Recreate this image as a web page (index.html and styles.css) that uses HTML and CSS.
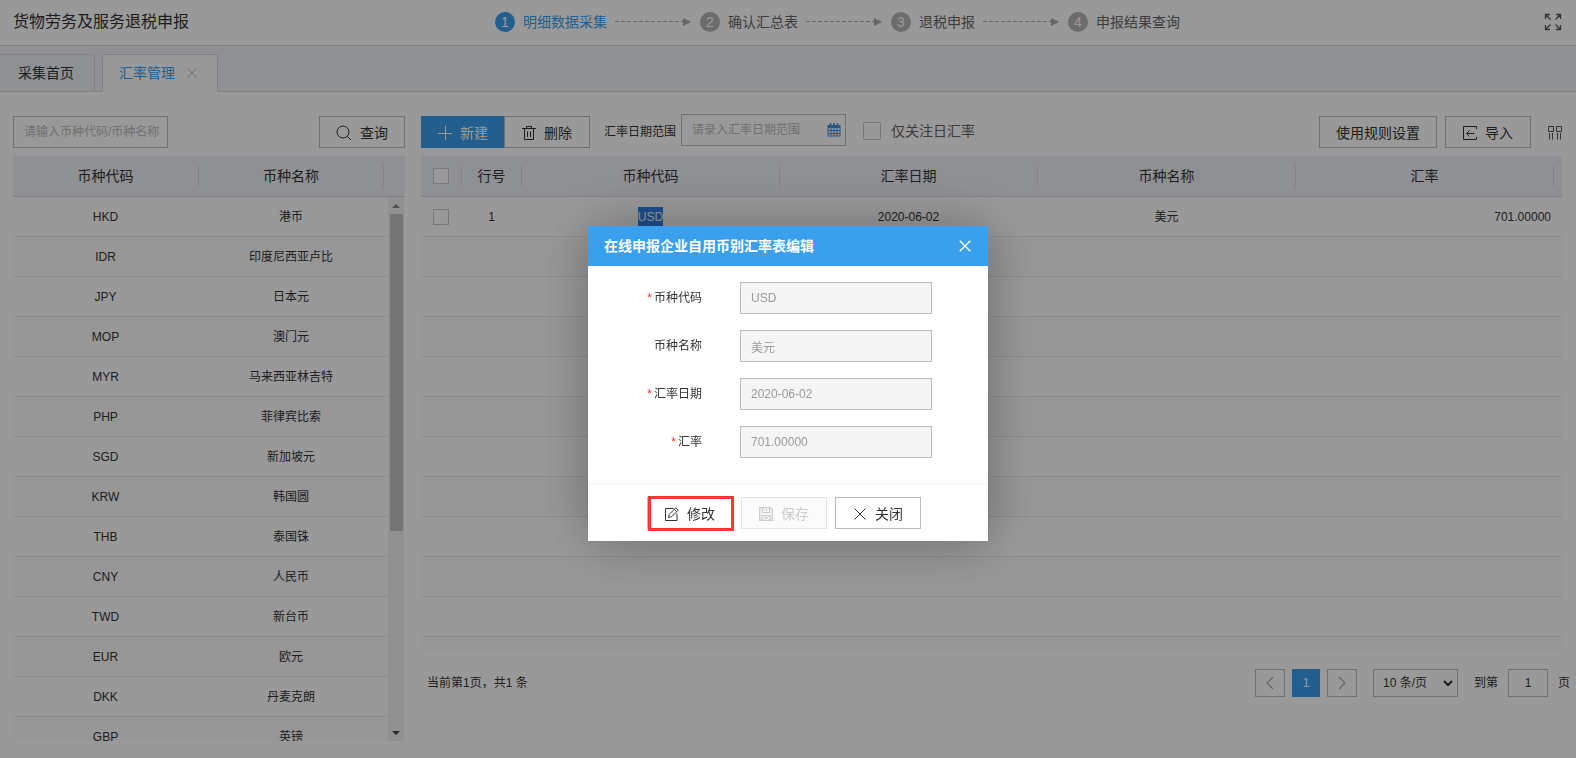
FILE: index.html
```html
<!DOCTYPE html>
<html lang="zh-CN">
<head>
  <meta charset="UTF-8">
  <meta name="viewport" content="width=device-width, initial-scale=1.0">
  <title>货物劳务及服务退税申报</title>
  <link rel="stylesheet" href="styles.css">
</head>
<body>
  <header class="header">
    <h1 class="title">货物劳务及服务退税申报</h1>
    <ol class="steps">
      <li class="step active"><span class="num">1</span>明细数据采集<i class="line"></i></li>
      <li class="step"><span class="num">2</span>确认汇总表<i class="line"></i></li>
      <li class="step"><span class="num">3</span>退税申报<i class="line"></i></li>
      <li class="step"><span class="num">4</span>申报结果查询</li>
    </ol>
    <button class="icon-btn full" aria-label="全屏">
      <svg width="18" height="18" viewBox="0 0 18 18" fill="none" stroke="#555" stroke-width="1.3">
        <path d="M1.5 6V1.5H6M1.5 1.5L6.5 6.5M12 1.5h4.5V6M16.5 1.5L11.5 6.5M1.5 12v4.5H6M1.5 16.5L6.5 11.5M12 16.5h4.5V12M16.5 16.5L11.5 11.5"/>
      </svg>
    </button>
  </header>

  <nav class="tabs">
    <a class="tab first" href="#">采集首页</a>
    <a class="tab current" href="#">汇率管理
      <svg width="10" height="10" viewBox="0 0 10 10" stroke="#bbb"><path d="M.5.5l9 9M9.5.5l-9 9"/></svg>
    </a>
  </nav>

  <main class="main">
    <section class="left">
      <div class="toolbar between">
        <input class="text search" type="text" placeholder="请输入币种代码/币种名称" aria-label="币种">
        <button class="btn">
          <svg width="16" height="16" viewBox="0 0 16 16" fill="none" stroke="currentColor"><circle cx="7" cy="7" r="6"/><path d="M11.3 11.3L15 15"/></svg>
          查询
        </button>
      </div>
      <div class="list">
        <table class="grid">
          <colgroup><col class="c-code"><col class="c-name"><col></colgroup>
          <thead>
            <tr><th><span>币种代码</span></th><th><span>币种名称</span></th><th></th></tr>
          </thead>
          <tbody>
            <tr><td>HKD</td><td>港币</td><td></td></tr>
            <tr><td>IDR</td><td>印度尼西亚卢比</td><td></td></tr>
            <tr><td>JPY</td><td>日本元</td><td></td></tr>
            <tr><td>MOP</td><td>澳门元</td><td></td></tr>
            <tr><td>MYR</td><td>马来西亚林吉特</td><td></td></tr>
            <tr><td>PHP</td><td>菲律宾比索</td><td></td></tr>
            <tr><td>SGD</td><td>新加坡元</td><td></td></tr>
            <tr><td>KRW</td><td>韩国圆</td><td></td></tr>
            <tr><td>THB</td><td>泰国铢</td><td></td></tr>
            <tr><td>CNY</td><td>人民币</td><td></td></tr>
            <tr><td>TWD</td><td>新台币</td><td></td></tr>
            <tr><td>EUR</td><td>欧元</td><td></td></tr>
            <tr><td>DKK</td><td>丹麦克朗</td><td></td></tr>
            <tr><td>GBP</td><td>英镑</td><td></td></tr>
          </tbody>
        </table>
        <div class="scrollbar">
          <i class="arrow up"></i>
          <div class="track"><div class="thumb"></div></div>
          <i class="arrow down"></i>
        </div>
      </div>
    </section>

    <section class="right">
      <div class="toolbar">
        <div class="group">
          <button class="btn primary">
            <svg width="14" height="14" viewBox="0 0 14 14" stroke="currentColor"><path d="M7.5 0v14M0 7.5h14"/></svg>
            新建
          </button>
          <button class="btn">
            <svg width="14" height="14" viewBox="0 0 14 14" fill="none" stroke="currentColor"><path d="M0 2.5h14M4.5 2.5v-2h5v2M2.5 2.5v11h9v-11M5.5 5.5v5.5M8.500 5.500v5.500"/></svg>
            删除
          </button>
        </div>
        <label class="range-label" for="range">汇率日期范围</label>
        <div class="range">
          <input class="text" id="range" type="text" placeholder="请录入汇率日期范围">
          <svg width="14" height="14" viewBox="0 0 14 14" fill="none" stroke="#4a90dc"><rect x="1" y="2.5" width="12" height="10.5"/><path d="M1 3.5h12" stroke-width="3"/><path d="M1 7.5h12M1 10.5h12M4 4v9M7 4v9M10 4v9"/><path d="M3.5 0v3M7 0v3M10.5 0v3" stroke-width="1.5"/></svg>
        </div>
        <label class="only"><input class="check large" type="checkbox">仅关注日汇率</label>
        <div class="actions">
          <button class="btn">使用规则设置</button>
          <button class="btn">
            <svg width="14" height="14" viewBox="0 0 14 14" fill="none" stroke="currentColor"><path d="M13.5 3V.5H.5v13h13V11M3.5 7.5h8M6.5 4.5l-3 3 3 3"/></svg>
            导入
          </button>
          <button class="icon-btn" aria-label="列设置">
            <svg width="14" height="14" viewBox="0 0 14 14" fill="none" stroke="#555"><path d="M.5.5h5v5h-5zM8.5.5h5v5h-5zM1.5 7v6.500M4.5 7v6.500M9.5 7v6.500M12.5 7v6.500"/></svg>
          </button>
        </div>
      </div>

      <div class="rates">
        <table class="grid">
          <colgroup><col class="c-check"><col class="c-no"><col><col><col><col><col class="c-end"></colgroup>
          <thead>
            <tr>
              <th><span><input class="check" type="checkbox" aria-label="全选"></span></th>
              <th><span>行号</span></th>
              <th><span>币种代码</span></th>
              <th><span>汇率日期</span></th>
              <th><span>币种名称</span></th>
              <th><span>汇率</span></th>
              <th></th>
            </tr>
          </thead>
          <tbody>
            <tr>
              <td><input class="check" type="checkbox" aria-label="选择第1行"></td>
              <td>1</td>
              <td><mark>USD</mark></td>
              <td>2020-06-02</td>
              <td>美元</td>
              <td class="num-cell">701.00000</td>
              <td></td>
            </tr>
            <tr><td colspan="7"></td></tr>
            <tr><td colspan="7"></td></tr>
            <tr><td colspan="7"></td></tr>
            <tr><td colspan="7"></td></tr>
            <tr><td colspan="7"></td></tr>
            <tr><td colspan="7"></td></tr>
            <tr><td colspan="7"></td></tr>
            <tr><td colspan="7"></td></tr>
            <tr><td colspan="7"></td></tr>
            <tr><td colspan="7"></td></tr>
            <tr><td colspan="7"></td></tr>
          </tbody>
        </table>
      </div>

      <div class="pager">
        <span class="total">当前第1页，共1 条</span>
        <button class="page" aria-label="上一页"><svg width="8" height="14" viewBox="0 0 8 14" fill="none" stroke="currentColor" stroke-width="1.3"><path d="M7 1L1 7l6 6"/></svg></button>
        <button class="page now">1</button>
        <button class="page" aria-label="下一页"><svg width="8" height="14" viewBox="0 0 8 14" fill="none" stroke="currentColor" stroke-width="1.3"><path d="M1 1l6 6-6 6"/></svg></button>
        <div class="size">
          <select aria-label="每页条数"><option>10 条/页</option></select>
          <svg width="10" height="7" viewBox="0 0 10 7" fill="none" stroke="#333" stroke-width="2"><path d="M1 1l4 4 4-4"/></svg>
        </div>
        <label for="goto">到第</label>
        <input class="text goto" id="goto" type="text" value="1">
        <span>页</span>
      </div>
    </section>
  </main>

  <div class="mask">
    <div class="dialog" role="dialog" aria-labelledby="dlgTitle">
      <div class="dialog-head">
        <h2 id="dlgTitle">在线申报企业自用币别汇率表编辑</h2>
        <button class="icon-btn" aria-label="关闭窗口">
          <svg width="12" height="12" viewBox="0 0 12 12" stroke="#fff" stroke-width="1.3"><path d="M.7.7l10.6 10.6M11.3.7L.7 11.3"/></svg>
        </button>
      </div>
      <form class="dialog-body">
        <label for="code"><b>*</b>币种代码</label>
        <input class="text" id="code" type="text" value="USD" disabled>
        <label for="name">币种名称</label>
        <input class="text" id="name" type="text" value="美元" disabled>
        <label for="date"><b>*</b>汇率日期</label>
        <input class="text" id="date" type="text" value="2020-06-02" disabled>
        <label for="rate"><b>*</b>汇率</label>
        <input class="text" id="rate" type="text" value="701.00000" disabled>
      </form>
      <div class="dialog-foot">
        <button class="btn marked">
          <svg width="14" height="14" viewBox="0 0 14 14" fill="none" stroke="currentColor"><path d="M8.5 1.5h-8v12h11.500V6.500M3.500 10.500l.8-3.200L10.800.8l2.400 2.400-6.500 6.500zM9.300 2.300l2.400 2.400"/></svg>
          修改
        </button>
        <button class="btn" disabled>
          <svg width="14" height="14" viewBox="0 0 14 14" fill="none" stroke="currentColor" stroke-width="1.3"><path d="M.7.7h10.6l2 2v10.6H.7zM3.5.7v5h7v-5M7.5 2v2M3 13.3V8.7h8v4.600M5 11h4"/></svg>
          保存
        </button>
        <button class="btn">
          <svg width="14" height="14" viewBox="0 0 14 14" stroke="currentColor"><path d="M1.5 1.5l11 11M12.5 1.5l-11 11"/></svg>
          关闭
        </button>
      </div>
    </div>
  </div>
</body>
</html>
```

FILE: styles.css
```css
* {
  box-sizing: border-box;
}
body {
  margin: 0;
  font: 12px/20px "Liberation Sans", "Noto Sans CJK SC", sans-serif;
  color: #333;
  background: #fff;
}
button, input, select {
  font: inherit;
  color: inherit;
  margin: 0;
}
svg {
  flex: none;
}

/* header */
.header {
  display: flex;
  align-items: center;
  height: 46px;
  padding: 0 14px 2px 13px;
  border-bottom: 1px solid #d8d8d8;
}
.title {
  margin: 0;
  font-size: 16px;
  font-weight: normal;
}
.steps {
  flex: 1;
  display: flex;
  justify-content: center;
  gap: 8px;
  margin: 0;
  padding: 0;
  list-style: none;
  font-size: 14px;
  color: #666;
}
.step {
  display: flex;
  align-items: center;
  gap: 8px;
}
.step.active {
  color: #3a9fed;
}
.num {
  width: 20px;
  height: 20px;
  border-radius: 50%;
  text-align: center;
  color: #fff;
  background: #b4b4b4;
}
.active .num {
  background: #3a9fed;
}
.line {
  display: flex;
  align-items: center;
  width: 77px;
}
.line::before {
  content: "";
  width: 68px;
  height: 1px;
  background: repeating-linear-gradient(90deg, #aaa 0 4px, transparent 4px 6px);
}
.line::after {
  content: "";
  border: 4px solid transparent;
  border-left: 8px solid #aaa;
  border-right: 0;
}
.icon-btn {
  display: flex;
  padding: 0;
  border: 0;
  background: none;
  cursor: pointer;
}
.full {
  width: 76px;
  justify-content: flex-end;
}

/* tabs */
.tabs {
  display: flex;
  align-items: flex-end;
  gap: 7px;
  height: 46px;
  background: #eef0f6;
  box-shadow: inset 0 -1px #d8d8d8;
}
.tab {
  display: flex;
  align-items: center;
  gap: 12px;
  height: 38px;
  padding: 0 20px 0 16px;
  border: 1px solid #d8d8d8;
  border-radius: 4px 4px 0 0;
  font-size: 14px;
  color: #333;
  text-decoration: none;
}
.tab.first {
  padding: 0 20px 0 18px;
  border-left: 0;
  border-top-left-radius: 0;
}
.tab.current {
  color: #3a9fed;
  background: #fff;
  border-bottom-color: #fff;
}

/* content */
.main {
  display: flex;
  gap: 16px;
  padding: 24px 14px 0 13px;
}
.left {
  flex: 0 0 392px;
}
.right {
  flex: 1;
  min-width: 0;
}
.toolbar {
  display: flex;
  height: 40px;
}
.between {
  justify-content: space-between;
}
.btn {
  display: flex;
  align-items: center;
  justify-content: center;
  gap: 8px;
  height: 32px;
  padding: 1px 16px 0;
  border: 1px solid #bbb;
  background: #fff;
  font-size: 14px;
  white-space: nowrap;
  cursor: pointer;
}
.toolbar .btn, .dialog-foot .btn {
  min-width: 86px;
}
.text {
  height: 32px;
  padding: 0 8px 0 10px;
  border: 1px solid #bbb;
  border-radius: 0;
  background: #fff;
}
.text::placeholder {
  color: #bbb;
  opacity: 1;
}
.search {
  width: 155px;
  padding-right: 4px;
}
.group {
  display: flex;
}
.toolbar .primary {
  min-width: 84px;
  border-color: #3a9fed;
  color: #fff;
  background: #3a9fed;
}
.group .btn + .btn {
  margin-left: -1px;
}
.range-label {
  margin: 6px 5px 0 14px;
}
.range {
  position: relative;
  margin-top: -2px;
}
.range .text {
  width: 165px;
}
.range svg {
  position: absolute;
  top: 9px;
  right: 5px;
}
.only {
  display: flex;
  align-items: center;
  gap: 10px;
  height: 30px;
  margin-left: 17px;
  font-size: 14px;
  color: #666;
}
.check {
  appearance: none;
  display: block;
  width: 16px;
  height: 16px;
  margin: 0 auto;
  border: 1px solid #c8c8c8;
  background: #fff;
}
.check.large {
  width: 18px;
  height: 18px;
  border-radius: 2px;
}
.actions {
  display: flex;
  gap: 8px;
  margin-left: auto;
}
.actions .icon-btn {
  margin: 10px 0 0 9px;
}

/* tables */
.grid {
  width: 100%;
  table-layout: fixed;
  border-spacing: 0;
  text-align: center;
}
.grid th {
  height: 41px;
  padding: 0;
  border-bottom: 1px solid #d8d8d8;
  background: #eef0f6;
  font-size: 14px;
  font-weight: normal;
}
.grid th span {
  display: flex;
  align-items: center;
  justify-content: center;
  height: 20px;
  border-right: 1px solid #d8d8d8;
}
.grid td {
  height: 40px;
  padding: 0 1px 0 0;
  border-bottom: 1px solid #ebebeb;
}
.grid tr:nth-child(even) td {
  background: #fcfcfc;
}
.grid .num-cell {
  padding-right: 3px;
  text-align: right;
}
.c-code {
  width: 186px;
}
.c-name {
  width: 185px;
}
.c-check {
  width: 41px;
}
.c-no {
  width: 60px;
}
.c-end {
  width: 8px;
}
mark {
  display: inline-block;
  color: #fff;
  background: #2d84ee;
}
.list {
  position: relative;
  height: calc(100vh - 173px);
  overflow: hidden;
  min-height: 300px;
}
.rates {
  height: calc(100vh - 261px);
  min-height: 212px;
  overflow: hidden;
}
.scrollbar {
  position: absolute;
  top: 41px;
  right: 1px;
  bottom: 0;
  width: 16px;
  display: flex;
  flex-direction: column;
  align-items: center;
  padding: 7px 0 6px;
  background: #f1f1f1;
}
.track {
  flex: 1;
  width: 13px;
  margin: 6px 0;
}
.thumb {
  height: 62%;
  background: #c1c1c1;
}
.arrow {
  border: 4px solid transparent;
}
.arrow.up {
  border-top: 0;
  border-bottom-color: #888;
}
.arrow.down {
  border-bottom: 0;
  border-top-color: #444;
}

/* pager */
.pager {
  display: flex;
  align-items: center;
  margin: 16px -8px 0 6px;
}
.total {
  margin-right: auto;
}
.page {
  display: flex;
  align-items: center;
  justify-content: center;
  width: 30px;
  height: 28px;
  margin-right: 7px;
  padding: 0;
  border: 1px solid #bbb;
  background: #fff;
  color: #aaa;
}
.page.now {
  width: 28px;
  border: 0;
  color: #fff;
  background: #3a9fed;
}
.size {
  position: relative;
  margin: 0 16px 0 9px;
}
.size select {
  appearance: none;
  display: block;
  width: 85px;
  height: 28px;
  padding: 0 9px;
  border: 1px solid #bbb;
  border-radius: 0;
  background: #fff;
}
.size svg {
  position: absolute;
  top: 11px;
  right: 5px;
}
.goto {
  width: 40px;
  height: 28px;
  margin: 0 10px;
  padding: 0;
  text-align: center;
}

/* dialog */
.mask {
  position: fixed;
  inset: 0;
  display: flex;
  align-items: center;
  justify-content: center;
  padding-top: 9px;
  background: rgba(0, 0, 0, 0.4);
}
.dialog {
  width: 400px;
  background: #fff;
  box-shadow: 1px 1px 50px rgba(0, 0, 0, 0.3);
}
.dialog-head {
  display: flex;
  align-items: center;
  justify-content: space-between;
  height: 40px;
  padding: 0 17px 0 16px;
  color: #fff;
  background: #3a9fed;
}
.dialog-head h2 {
  margin: 0;
  font-size: 14px;
}
.dialog-body {
  display: grid;
  grid-template-columns: 98px 192px;
  gap: 16px 38px;
  align-items: center;
  padding: 16px 16px 27px;
}
.dialog-body label {
  text-align: right;
  white-space: nowrap;
}
.dialog-body b {
  margin-right: 2px;
  font-weight: normal;
  color: #f33;
}
.dialog-body .text {
  color: #999;
  background: #f5f5f5;
}
.dialog-foot {
  display: flex;
  justify-content: center;
  gap: 8px;
  padding: 12px 8px 12px 0;
  box-shadow: 0 -1px 5px rgba(0, 0, 0, 0.06);
}
.dialog-foot .btn:disabled {
  border-color: #e5e5e5;
  color: #ccc;
  background: #fbfbfb;
}
.marked {
  position: relative;
}
.marked::after {
  content: "";
  position: absolute;
  inset: -2px -2px -3px 0;
  border: 3px solid #fa3636;
}
```
